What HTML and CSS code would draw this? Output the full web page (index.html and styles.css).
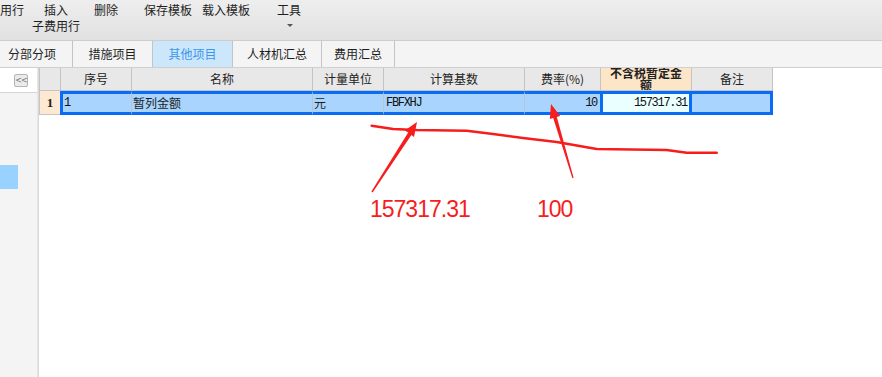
FILE: index.html
```html
<!DOCTYPE html>
<html lang="zh">
<head>
<meta charset="utf-8">
<title>其他项目</title>
<link rel="stylesheet" href="styles.css">
</head>
<body>
<div class="toolbar">
  <div class="tb b1">用行</div>
  <div class="tb b2">插入<br>子费用行</div>
  <div class="tb b3">删除</div>
  <div class="tb b4">保存模板</div>
  <div class="tb b5">载入模板</div>
  <div class="tb b6">工具<span class="caret"></span></div>
</div>
<div class="tabs">
  <div class="tab t1">分部分项</div>
  <div class="tab t2">措施项目</div>
  <div class="tab t3 active">其他项目</div>
  <div class="tab t4">人材机汇总</div>
  <div class="tab t5">费用汇总</div>
</div>
<div class="main">
  <div class="side">
    <div class="side-top"><span class="collapse">&lt;&lt;</span></div>
    <div class="side-body"><div class="side-mark"></div></div>
  </div>
  <div class="grid">
    <div class="hrow">
      <div class="hc rh"></div>
      <div class="hc w1">序号</div>
      <div class="hc w2">名称</div>
      <div class="hc w3">计量单位</div>
      <div class="hc w4">计算基数</div>
      <div class="hc w5">费率(%)</div>
      <div class="hc w6 amount-h"><span>不含税暂定金额</span></div>
      <div class="hc w7">备注</div>
    </div>
    <div class="drow">
      <div class="rh-cell">1</div>
      <div class="dc d1 first mono">1</div>
      <div class="dc d2">暂列金额</div>
      <div class="dc d3">元</div>
      <div class="dc d4 mono">FBFXHJ</div>
      <div class="dc d5 mono num">10</div>
      <div class="dc d6 mono num cur">157317.31</div>
      <div class="dc d7 last"></div>
    </div>
  </div>
</div>
<svg class="marks" width="882" height="377" viewBox="0 0 882 377">
  <polyline points="371.7,125.7 393,129 416.7,130 466.7,130.7 493,134 523,138 556.7,142 596.7,149 666.7,150 686.7,152.7 716.7,152.7" fill="none" stroke="#f71d1d" stroke-width="2.6" stroke-linejoin="round" stroke-linecap="round"/>
  <polygon points="371.4,191.6 372.6,192.4 411.4,135.1 414,137 417,122 404.8,130.6 408.2,132.6" fill="#f71d1d"/>
  <polygon points="573.6,177.8 572.4,178.2 553.2,117.9 549.8,119 551,104 560.2,115.9 556.8,116.9" fill="#f71d1d"/>
</svg>
<span class="note n1">157317.31</span>
<span class="note n2">100</span>
</body>
</html>
```
FILE: styles.css
```css
* { box-sizing: border-box; }
body {
  margin: 0;
  width: 882px;
  height: 377px;
  overflow: hidden;
  background: #fff;
  font-family: "Noto Sans CJK SC", "Liberation Sans", sans-serif;
  font-size: 12px;
  color: #1e1e1e;
  position: relative;
}
.toolbar {
  height: 41px;
  display: flex;
  align-items: flex-start;
  background: linear-gradient(#eeeeee, #e1e1e1);
  border-bottom: 1px solid #cdcdcd;
  padding-top: 2px;
}
.tb {
  text-align: center;
  line-height: 16px;
  white-space: nowrap;
  position: relative;
}
.b1 { width: 22px; text-align: left; }
.b2 { width: 48px; margin-left: 10px; }
.b3 { width: 24px; margin-left: 14px; }
.b4 { width: 48px; margin-left: 26px; }
.b5 { width: 48px; margin-left: 10px; }
.b6 { width: 24px; margin-left: 27px; }
.caret {
  position: absolute;
  left: 10px;
  top: 22px;
  width: 0;
  height: 0;
  border-left: 3px solid transparent;
  border-right: 3px solid transparent;
  border-top: 3px solid #555;
}
.tabs {
  height: 27px;
  display: flex;
  background: #f4f4f4;
  border-bottom: 1px solid #cfcfcf;
}
.tab {
  height: 26px;
  line-height: 26px;
  text-align: center;
  border-right: 1px solid #c4c4c4;
  color: #1e1e1e;
}
.t1 { width: 73px; text-align: left; padding-left: 8px; }
.t2 { width: 80px; }
.t3 { width: 80px; }
.t4 { width: 89px; }
.t5 { width: 73px; }
.tab.active { background: #cce6fb; color: #3b97ec; }
.main {
  display: flex;
  height: 309px;
}
.side {
  width: 39px;
  border-right: 2px solid #e6e6e6;
  background: #f4f4f4;
  display: flex;
  flex-direction: column;
}
.side-top {
  height: 25px;
  background: #fff;
  border-bottom: 1px solid #d6d6d6;
  display: flex;
  align-items: center;
  padding-left: 14px;
}
.collapse {
  width: 14px;
  height: 13px;
  border: 1px solid #b4b4b4;
  border-radius: 2px;
  background: #ebebeb;
  color: #777;
  font-family: "DejaVu Sans", sans-serif;
  font-size: 8px;
  line-height: 11px;
  text-align: center;
  letter-spacing: -1px;
}
.side-body { flex: 1; padding-top: 72px; }
.side-mark { width: 18px; height: 24px; background: #9ad2ff; }
.grid {
  flex: 1;
  border-left: 1px solid #d9d9d9;
  margin-left: -1px;
}
.hrow { display: flex; height: 23px; }
.hc {
  height: 23px;
  background: #e8e8e8;
  border-right: 1px solid #c4c4c4;
  border-bottom: 1px solid #c4c4c4;
  text-align: center;
  line-height: 22px;
  color: #222;
  overflow: hidden;
}
.hc.rh { width: 22px; border-left: 1px solid #c4c4c4; }
.w1 { width: 71px; }
.w2 { width: 181px; }
.w3 { width: 71px; }
.w4 { width: 141px; }
.w5 { width: 76px; }
.w6 { width: 91px; }
.w7 { width: 81px; }
.amount-h {
  background: #fde5c8;
  font-weight: bold;
  line-height: 12px;
  display: flex;
  align-items: center;
  justify-content: center;
  padding: 0 6px;
}
.amount-h span { display: block; }
.drow { display: flex; height: 24px; }
.rh-cell {
  width: 21px;
  height: 24px;
  background: #fde8d1;
  border-left: 1px solid #c4c4c4;
  border-bottom: 1px solid #c4c4c4;
  font-family: "Liberation Serif", serif;
  font-weight: bold;
  font-size: 13px;
  line-height: 23px;
  text-align: center;
}
.dc {
  height: 24px;
  background: #a8d4fd;
  border-top: 3px solid #0a6cf5;
  border-bottom: 3px solid #0a6cf5;
  border-right: 1px solid #b3c6d8;
  line-height: 18px;
  padding-left: 1px;
  white-space: nowrap;
  overflow: hidden;
}
.dc.first { border-left: 3px solid #0a6cf5; }
.d1 { width: 72px; }
.d2 { width: 181px; }
.d3 { width: 71px; }
.d4 { width: 141px; padding-left: 2px; }
.d5 { width: 75px; border-right: none; }
.d6 { width: 92px; }
.d7 { width: 81px; border-right: 3px solid #0a6cf5; }
.dc.cur {
  background: #eaffff;
  border: 3px solid #0a6cf5;
}
.mono {
  font-family: "Liberation Mono", monospace;
  font-size: 12px;
  letter-spacing: -1.3px;
  color: #111;
}
.num { text-align: right; padding-right: 3px; }
.cur.num { padding-right: 2px; }
.marks {
  position: absolute;
  left: 0;
  top: 0;
  pointer-events: none;
}
.note {
  position: absolute;
  color: #f71d1d;
  font-family: "Liberation Sans", sans-serif;
  font-size: 23px;
  letter-spacing: -1px;
  line-height: 23px;
}
.n1 { left: 370px; top: 198px; }
.n2 { left: 537px; top: 198px; }
```
